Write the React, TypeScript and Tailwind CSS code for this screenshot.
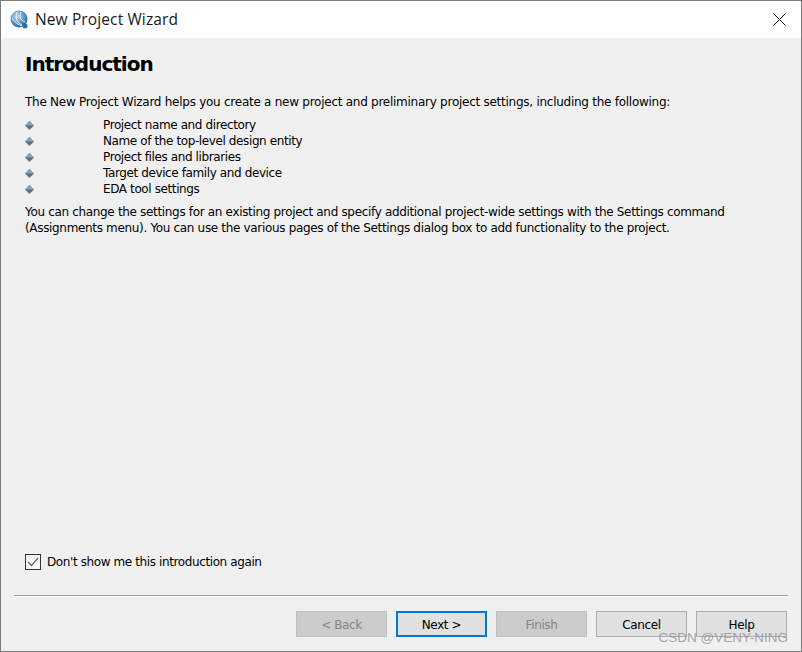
// App.tsx - New Project Wizard dialog

const items = [
  'Project name and directory',
  'Name of the top-level design entity',
  'Project files and libraries',
  'Target device family and device',
  'EDA tool settings',
];

const bodyFont = "font-['DejaVu_Sans',sans-serif] text-[12px] text-black";

function Globe() {
  return (
    <svg width="19" height="20" viewBox="0 0 19 20">
      <defs>
        <radialGradient id="g" cx="0.4" cy="0.35" r="0.7">
          <stop offset="0" stopColor="#c4dcef" />
          <stop offset="0.6" stopColor="#5b93c4" />
          <stop offset="1" stopColor="#1f5d96" />
        </radialGradient>
      </defs>
      <circle cx="9" cy="9" r="8.5" fill="url(#g)" />
      <path d="M7 2 C5 7 6 12 12 15 M11 2 C9 6 10 10 15 12 M2 8 C5 13 9 15 12 16" stroke="#e8f2fa" strokeWidth="1" fill="none" />
      <circle cx="15" cy="16" r="2.5" fill="#2a6ea6" />
    </svg>
  );
}

function Bullet() {
  return (
    <svg width="9" height="9" viewBox="0 0 9 9">
      <path d="M4.5 0 L9 4.5 L4.5 9 L0 4.5 Z" fill="#5d6f88" />
      <path d="M4.5 0 L9 4.5 L0 4.5 Z" fill="#93a3b7" />
    </svg>
  );
}

function WizardButton({ label, disabled, focused }: { label: string; disabled?: boolean; focused?: boolean }) {
  return (
    <button
      className={`w-[91px] h-[26px] pt-[1px] flex items-center justify-center tracking-[-0.4px] ${bodyFont} ${
        disabled
          ? 'bg-[#cccccc] border border-[#bfbfbf] !text-[#838383]'
          : focused
          ? 'bg-[#e1e1e1] border-2 border-[#0078d7]'
          : 'bg-[#e1e1e1] border border-[#adadad]'
      }`}
    >
      {label}
    </button>
  );
}

export default function App() {
  return (
    <div className="relative w-[802px] h-[652px] flex flex-col bg-[#f0f0f0] border border-[#7a7a7a] overflow-hidden">
      <div className="h-[37px] bg-white flex items-center shrink-0">
        <div className="ml-[9px] mr-[6px] flex"><Globe /></div>
        <span className="font-['Open_Sans',sans-serif] text-[15.5px] text-[#1a1a1a] tracking-[0.12px]">New Project Wizard</span>
        <svg className="ml-auto mr-[15px]" width="13" height="13" viewBox="0 0 13 13">
          <path d="M0.5 0.5 L12.5 12.5 M12.5 0.5 L0.5 12.5" stroke="#111" strokeWidth="1" />
        </svg>
      </div>

      <div className="flex-1 flex flex-col px-[24px]">
        <h1 className="mt-[13px] h-[26px] leading-[26px] font-['DejaVu_Sans',sans-serif] font-bold text-[20px] tracking-[-1px] text-black">
          Introduction
        </h1>
        <p className={`mt-[17px] h-[16px] leading-[16px] tracking-[-0.26px] ${bodyFont}`}>
          The New Project Wizard helps you create a new project and preliminary project settings, including the following:
        </p>
        <ul className="mt-[7px]">
          {items.map((item) => (
            <li key={item} className={`h-[16px] leading-[16px] flex items-center tracking-[-0.39px] ${bodyFont}`}>
              <span className="w-[78px] flex"><Bullet /></span>
              {item}
            </li>
          ))}
        </ul>
        <p className={`mt-[7px] leading-[16px] tracking-[-0.33px] ${bodyFont}`}>
          You can change the settings for an existing project and specify additional project-wide settings with the Settings command
          <br />
          (Assignments menu). You can use the various pages of the Settings dialog box to add functionality to the project.
        </p>

        <label className={`mt-auto mb-[25px] flex items-center gap-[6px] h-[16px] tracking-[-0.39px] ${bodyFont}`}>
          <span className="w-[16px] h-[16px] border border-[#333333] bg-[#f5f5f5] flex items-center justify-center">
            <svg width="12" height="10" viewBox="0 0 12 10">
              <path d="M1 5 L4.5 8.5 L11 1" stroke="#666" strokeWidth="1.2" fill="none" />
            </svg>
          </span>
          Don't show me this introduction again
        </label>
      </div>

      <div className="mx-[13px] border-t border-[#a0a0a0] border-b-white border-b h-[2px] shrink-0" />

      <div className="h-[54px] flex items-start justify-end gap-[9px] pt-[14px] pr-[14px] shrink-0">
        <WizardButton label="< Back" disabled />
        <WizardButton label="Next >" focused />
        <WizardButton label="Finish" disabled />
        <WizardButton label="Cancel" />
        <WizardButton label="Help" />
      </div>

      <span className="absolute right-[13px] bottom-[3px] font-['Liberation_Sans',sans-serif] text-[13.5px] text-[#8f8f8f]/80 whitespace-nowrap">
        CSDN @VENY-NING
      </span>
    </div>
  );
}
